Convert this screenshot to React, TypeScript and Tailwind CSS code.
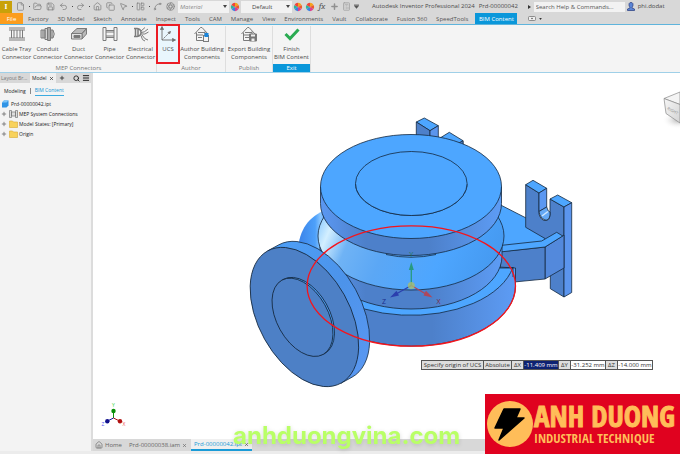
import type { ReactNode } from "react";
import {
  File,
  FolderOpen,
  Save,
  Undo2,
  Redo2,
  House,
  Copy,
  MousePointer2,
  LayoutPanelLeft,
  Spline,
  Aperture,
  Plus,
  Calculator,
  Search,
  Menu,
  X,
} from "lucide-react";

const quickTools = [
  { label: "New", icon: File, menu: true },
  { label: "Open", icon: FolderOpen },
  { label: "Save", icon: Save },
  { label: "Undo", icon: Undo2, menu: true },
  { label: "Redo", icon: Redo2, menu: true },
  { label: "Home", icon: House },
  { label: "Switch", icon: Copy },
  { label: "Select", icon: MousePointer2, menu: true },
  { label: "Team Web", icon: LayoutPanelLeft, menu: true },
  { label: "Update", icon: Spline },
  { label: "Appearance", icon: Aperture },
];

const ribbonTabs = [
  "Factory",
  "3D Model",
  "Sketch",
  "Annotate",
  "Inspect",
  "Tools",
  "CAM",
  "Manage",
  "View",
  "Environments",
  "Vault",
  "Collaborate",
  "Fusion 360",
  "SpeedTools",
];

function ColorWheel() {
  return (
    <svg viewBox="0 0 12 12" className="size-[10px]" aria-hidden="true">
      <path d="M6 6V1A5 5 0 0 1 10.3 3.5Z" fill="#f6a21d" />
      <path d="M6 6L10.3 3.5A5 5 0 0 1 10.3 8.5Z" fill="#ef5a28" />
      <path d="M6 6L10.3 8.5A5 5 0 0 1 6 11Z" fill="#d9418f" />
      <path d="M6 6V11A5 5 0 0 1 1.7 8.5Z" fill="#3f7fe0" />
      <path d="M6 6L1.7 8.5A5 5 0 0 1 1.7 3.5Z" fill="#2eb39a" />
      <path d="M6 6L1.7 3.5A5 5 0 0 1 6 1Z" fill="#f04438" />
    </svg>
  );
}

function StyleSelect({ label, value, italic }: { label: string; value: string; italic?: boolean }) {
  return (
    <label className="relative flex h-[12px] w-[51px] items-center bg-[#f2f2f2]">
      <span className="sr-only">{label}</span>
      <select
        defaultValue={value}
        className={
          italic
            ? "h-full w-full appearance-none bg-transparent pl-[2px] text-[6px] italic leading-[12px] text-[#8a8a8a]"
            : "h-full w-full appearance-none bg-transparent pl-[11px] text-[6px] leading-[12px] text-[#444]"
        }
      >
        <option>{value}</option>
      </select>
      <svg viewBox="0 0 4 3" className="pointer-events-none absolute right-[2px] h-[3px] w-[4px]" aria-hidden="true">
        <path d="M0 0H4L2 3Z" fill="#444" />
      </svg>
    </label>
  );
}

function TitleBar() {
  return (
    <header className="flex h-[13px] items-center bg-[#d8d8d8] text-[6px] text-[#4a4a4a]">
      <button
        aria-label="Inventor menu"
        className="mr-[2px] flex h-[12px] w-[12px] items-center justify-center bg-[#c9a10a] font-serif text-[8px] font-bold leading-none text-white"
      >
        I
      </button>
      {quickTools.map(({ label, icon: Icon, menu }) => (
        <div key={label} className="flex items-center">
          <button aria-label={label} className="flex w-[13px] justify-center text-[#808080]">
            <Icon size={9} strokeWidth={2} />
          </button>
          {menu && (
            <span className="flex w-[4px] justify-center">
              <span className="size-[1px] bg-[#444]" />
            </span>
          )}
        </div>
      ))}
      <div className="ml-[1px] flex items-center">
        <StyleSelect label="Material" value="Material" italic />
        <button aria-label="Appearance browser" className="flex w-[12px] justify-center">
          <ColorWheel />
        </button>
        <StyleSelect label="Appearance" value="Default" />
      </div>
      <button aria-label="Adjust" className="flex w-[12px] justify-center">
        <ColorWheel />
      </button>
      <button aria-label="Clear" className="flex w-[12px] justify-center">
        <ColorWheel />
      </button>
      <button aria-label="Parameters" className="w-[12px] text-center font-serif text-[9px] italic leading-none text-[#555]">
        fx
      </button>
      <button aria-label="Add" className="flex w-[12px] justify-center text-[#909090]">
        <Plus size={9} strokeWidth={4} />
      </button>
      <button aria-label="Measure" className="flex w-[12px] justify-center text-[#a0a0a0]">
        <Calculator size={9} />
      </button>
      <button aria-label="Customize" className="flex w-[8px] justify-center">
        <svg viewBox="0 0 5 5" className="size-[5px]" aria-hidden="true">
          <path d="M0 .5H5M0 1.5H5L2.5 4.5Z" fill="#555" stroke="#555" strokeWidth=".4" />
        </svg>
      </button>
      <h1 className="ml-[12px] whitespace-nowrap">Autodesk Inventor Professional 2024</h1>
      <span className="ml-[4px] w-[49px] whitespace-nowrap">Prd-00000042</span>
      <svg viewBox="0 0 3 4" className="mr-[3px] h-[4px] w-[3px]" aria-hidden="true">
        <path d="M0 0L3 2L0 4Z" fill="#333" />
      </svg>
      <input
        aria-label="Search Help & Commands"
        placeholder="Search Help & Commands..."
        className="h-[10px] w-[91px] bg-[#f2f2f2] px-[2px] text-[6px] placeholder:text-[#555]"
      />
      <button className="ml-[2px] flex items-center gap-[3px]">
        <svg viewBox="0 0 8 9" className="h-[9px] w-[8px]" aria-hidden="true">
          <path d="M4 .5C6 .5 6 2 6 3C6 4.5 5 5 5 6L7.5 7V8.5H.5V7L3 6C3 5 2 4.5 2 3C2 2 2 .5 4 .5Z" fill="#5b85d6" stroke="#27397c" strokeWidth=".7" />
        </svg>
        phi.dodat
      </button>
    </header>
  );
}

function RibbonTabs() {
  return (
    <nav className="flex h-[12px] items-stretch border-b border-[#5fb4dc] bg-[#d8d8d8] text-[6px] leading-[11px] text-[#555]">
      <button className="w-[23px] bg-[#fb9d1e] pt-[1px] text-white">File</button>
      {ribbonTabs.map((tab) => (
        <button key={tab} className="whitespace-nowrap pl-[5px] pr-[4px] pt-[1px]">
          {tab}
        </button>
      ))}
      <button className="ml-[3px] w-[42px] whitespace-nowrap bg-[#0a97da] pt-[1px] text-white">BIM Content</button>
      <button aria-label="Ribbon display" className="ml-[11px] flex items-center gap-[3px]">
        <svg viewBox="0 0 8 5" className="h-[5px] w-[8px]" aria-hidden="true">
          <rect x=".5" y=".5" width="7" height="4" rx="1" fill="#eee" stroke="#777" strokeWidth=".8" />
          <circle cx="4" cy="2.5" r=".8" fill="#555" />
        </svg>
        <svg viewBox="0 0 4 3" className="h-[2px] w-[3px]" aria-hidden="true">
          <path d="M0 0H4L2 3Z" fill="#333" />
        </svg>
      </button>
    </nav>
  );
}

function Glyph({ children }: { children: ReactNode }) {
  return (
    <svg viewBox="0 0 16 16" className="mb-[3px] size-[16px]" fill="none" stroke="#7b7b7b" strokeWidth="1" aria-hidden="true">
      {children}
    </svg>
  );
}

function RibbonButton({ icon, lines, width }: { icon: ReactNode; lines: string[]; width: string }) {
  return (
    <button className={`flex flex-col items-center whitespace-nowrap ${width}`}>
      <Glyph>{icon}</Glyph>
      {lines.map((line) => (
        <span key={line} className="h-[8px]">
          {line}
        </span>
      ))}
    </button>
  );
}

const house = <path d="M.5 8L6.5 1.5H8L14 8M2.5 6.5V14.5H9M2.5 9H9M4 11.5H8M11 5.5V9M4 6.5H11" />;

function RibbonGroup({ title, active, children }: { title: string; active?: boolean; children: ReactNode }) {
  return (
    <section className="flex flex-col border-r border-[#dedede]">
      <div className="flex h-[38px]">{children}</div>
      <h2
        className={
          active
            ? "h-[8px] bg-[#0a97da] text-center leading-[8px] text-white"
            : "h-[8px] text-center leading-[8px] text-[#777]"
        }
      >
        {title}
      </h2>
    </section>
  );
}

function Ribbon() {
  return (
    <div className="flex h-[48px] border-b border-[#9fd0e8] bg-[#f4f4f4] pl-[1px] pt-[1px] text-[6px] leading-[8px] text-[#4c4c4c]">
      <RibbonGroup title="MEP Connectors">
        <RibbonButton
          width="w-[31px]"
          lines={["Cable Tray", "Connector"]}
          icon={<path d="M0 2H16M0 4H16M0 12H16M0 14H16M2.5 4V12M5 4V12M8 4V12M11 4V12M13.5 4V12" />}
        />
        <RibbonButton
          width="w-[31px]"
          lines={["Conduit", "Connector"]}
          icon={
            <>
              <path d="M5 2.5H7.5V13.5H5ZM7.5 1.5H10.5V14.5H7.5ZM1 4H5V12H1ZM10.5 4H13Q15.5 8 13 12H10.5Z" fill="#d5d5d5" />
              <path d="M3 4V12M9 2V14M12 4V12" />
            </>
          }
        />
        <RibbonButton
          width="w-[31px]"
          lines={["Duct", "Connector"]}
          icon={
            <>
              <path d="M.5 7.5L6 2.5H15.5L11 7.5ZM11 7.5L15.5 2.5V8L11 13Z" fill="#bababa" />
              <path d="M.5 7.5H11V13H.5Z" fill="#e2e2e2" />
              <path d="M3 9.5H9V11.5H3Z" fill="#777" />
            </>
          }
        />
        <RibbonButton
          width="w-[31px]"
          lines={["Pipe", "Connector"]}
          icon={<path d="M1 1.5H4V14.5H1ZM12 1.5H15V14.5H12ZM4 4.5H12M4 11.5H12M4 6H12M4 10H12" />}
        />
        <RibbonButton
          width="w-[31px]"
          lines={["Electrical", "Connector"]}
          icon={
            <>
              <path d="M1 2.5H4Q8 3 8 6.5Q8 10 4 10.5H1M2.5 2.5V10.5M5 3V10" strokeWidth="1.5" />
              <path d="M8 5L12 1.5M8 6.5Q11 7 15 3M8 8Q12 9 15.5 6M9 9Q12 14 15 14M8 9.5Q9 15 12 15" />
            </>
          }
        />
      </RibbonGroup>
      <RibbonGroup title="Author">
        <div className="relative flex bg-[#e9f6fd]">
          <RibbonButton
            width="w-[22px]"
            lines={["UCS"]}
            icon={
              <>
                <path d="M2 2V14H14" />
                <path d="M2 14L10 6" strokeDasharray="2 1" />
                <path d="M.5 3.5L2 .5L3.5 3.5ZM12.5 12.5L15.5 14L12.5 15.5ZM8 6.5L10.5 5.5L9.5 8Z" fill="#666" />
              </>
            }
          />
          <span className="pointer-events-none absolute -inset-x-[1px] -top-[2px] bottom-0 border-2 border-[#ec1c24]" />
        </div>
        <RibbonButton
          width="w-[46px]"
          lines={["Author Building", "Components"]}
          icon={
            <>
              {house}
              <rect x="9.5" y="9.5" width="5" height="6" />
              <rect x="10.5" y="7" width="4" height="4" fill="#1b87dd" stroke="none" />
            </>
          }
        />
      </RibbonGroup>
      <RibbonGroup title="Publish">
        <RibbonButton
          width="w-[46px]"
          lines={["Export Building", "Components"]}
          icon={
            <>
              {house}
              <path d="M8.5 8H15.5V15H8.5Z" fill="#777" />
              <path d="M10 8.5H14V10.5H10ZM10.5 12.5H13.5V15H10.5Z" fill="#eee" stroke="none" />
            </>
          }
        />
      </RibbonGroup>
      <RibbonGroup title="Exit" active>
        <RibbonButton
          width="w-[37px]"
          lines={["Finish", "BIM Content"]}
          icon={<path d="M1.5 8L6 12.5L14.5 3.5" stroke="#2aab52" strokeWidth="3" />}
        />
      </RibbonGroup>
    </div>
  );
}

function Folder() {
  return (
    <svg viewBox="0 0 9 8" className="h-[8px] w-[9px]" aria-hidden="true">
      <path d="M.5 1H3.5L4.5 2H8.5V7.5H.5Z" fill="#f8d25c" stroke="#d9a931" strokeWidth=".6" />
    </svg>
  );
}

function TreeRow({ icon, text }: { icon: ReactNode; text: string }) {
  return (
    <li className="flex h-[10px] items-center gap-[1px]">
      <button aria-label={`Expand ${text}`} className="flex w-[8px] justify-center text-[#666]">
        <Plus size={6} strokeWidth={3} />
      </button>
      {icon}
      <span className="whitespace-nowrap">{text}</span>
    </li>
  );
}

function ModelBrowser() {
  return (
    <aside className="flex w-[93px] shrink-0 flex-col border-r-2 border-[#dcdcdc] bg-[#f3f3f3] text-[5px] leading-[10px] text-[#222]">
      <div className="flex h-[10px] items-center bg-[#d8d8d8]">
        <button className="w-[30px] whitespace-nowrap pl-[1px] text-left text-[#777]">Layout Br...</button>
        <button className="flex h-full w-[26px] items-center justify-between bg-[#f0f0f0] px-[2px]">
          Model
          <X size={5} strokeWidth={3} />
        </button>
        <button aria-label="Add panel" className="flex w-[12px] justify-center">
          <Plus size={6} strokeWidth={3} />
        </button>
        <button aria-label="Find" className="ml-auto flex w-[10px] justify-center">
          <Search size={7} strokeWidth={3} />
        </button>
        <button aria-label="Browser menu" className="flex w-[10px] justify-center">
          <Menu size={8} strokeWidth={3} />
        </button>
      </div>
      <div className="flex items-center gap-[4px] px-[4px] pt-[2px]">
        <button>Modeling</button>
        <span className="h-[6px] w-[1px] bg-[#888]" />
        <button className="border-b border-[#3cabe0] text-[#1595d3]">BIM Content</button>
      </div>
      <div className="mt-[3px] flex h-[10px] items-center gap-[2px] pl-[1px]">
        <svg viewBox="0 0 8 8" className="size-[8px]" aria-hidden="true">
          <path d="M1 2.5L3 .5H7.5V5.5L5.5 7.5H1Z" fill="#2f94e6" />
          <path d="M1 2.5L3 .5H7.5L5.5 2.5Z" fill="#7cc4f8" />
        </svg>
        Prd-00000042.ipt
      </div>
      <ul>
        <TreeRow
          text="MEP System Connections"
          icon={
            <svg viewBox="0 0 9 8" className="h-[8px] w-[9px]" fill="#ddd" stroke="#777" strokeWidth=".7" aria-hidden="true">
              <path d="M.5.5H2.5V7.5H.5ZM6.5.5H8.5V7.5H6.5ZM2.5 2H6.5V6H2.5Z" />
            </svg>
          }
        />
        <TreeRow text="Model States: [Primary]" icon={<Folder />} />
        <TreeRow text="Origin" icon={<Folder />} />
      </ul>
    </aside>
  );
}

function PartDrawing() {
  return (
    <svg
      viewBox="93 73 587 366"
      className="absolute inset-0 h-full w-full"
      role="img"
      aria-label="Valve body part"
      strokeLinejoin="round"
    >
      <defs>
        <linearGradient id="wall">
          <stop offset="0" stopColor="#5b98f2" />
          <stop offset=".25" stopColor="#4d80ca" />
          <stop offset=".6" stopColor="#4d80ca" />
          <stop offset="1" stopColor="#5d9cf5" />
        </linearGradient>
        <linearGradient id="cone" x1="0" y1=".35" x2="1" y2=".6">
          <stop offset="0" stopColor="#8ccbff" />
          <stop offset=".08" stopColor="#d3efff" />
          <stop offset=".2" stopColor="#6fb3f5" />
          <stop offset=".4" stopColor="#5ba7f5" />
          <stop offset=".7" stopColor="#4da6ff" />
          <stop offset="1" stopColor="#4599f0" />
        </linearGradient>
        <linearGradient id="rim" x1="0" y1="0" x2="1" y2="1">
          <stop offset="0" stopColor="#4da0f8" />
          <stop offset=".5" stopColor="#4c93ea" />
          <stop offset="1" stopColor="#5b98f2" />
        </linearGradient>
        <linearGradient id="bulge">
          <stop offset="0" stopColor="#3a82e8" />
          <stop offset=".45" stopColor="#4da0fa" />
          <stop offset=".6" stopColor="#8cc8ff" />
          <stop offset=".75" stopColor="#4790ee" />
          <stop offset="1" stopColor="#3f88e6" />
        </linearGradient>
        <linearGradient id="cube" x1="0" y1="0" x2="1" y2="1">
          <stop offset="0" stopColor="#f6f6f6" />
          <stop offset="1" stopColor="#d4d4d4" />
        </linearGradient>
        <radialGradient id="cubeShadow">
          <stop offset="0" stopColor="#b5b5b5" />
          <stop offset="1" stopColor="#fff" stopOpacity="0" />
        </radialGradient>
      </defs>

      <g stroke="#14283f" strokeWidth=".8">
        <g fill="#4da6ff">
          <path d="M416.3 122L424.3 118L438.3 125.7L430 130.7Z" />
          <path d="M416.3 122L430 130.7V140H416.3Z" fill="#4d80ca" />
          <path d="M430 130.7L438.3 125.7V142H430Z" fill="#5b95ee" />
          <path d="M440 138L449.3 132.3L463 140.7V150H440Z" />
          <path d="M455 145L463 140.7V150H455Z" fill="#4d80ca" />
        </g>

        <path d="M498 204L502 205.7L530 220L548 238L541 243L504 247L490 240Z" fill="#4da6ff" />
        <path d="M525.7 184.7L539 193V214Q541 221 546 220.5Q550 220 550 214V199L564 207V297L550.3 288.7V268L545 238.5L525.7 227.3Z" fill="#4d80ca" />
        <path d="M525.7 184.7L533 180.3L546.7 188.3L539 193Z" fill="#4da6ff" />
        <path d="M539 193L546.7 188.3V207L539 211.5Z" fill="#5b98f2" />
        <path d="M539 211.5L546.7 207Q548 212 550 212V215Q549 221 545 220Q540 218 539 211.5Z" fill="#65a9f5" />
        <path d="M542 216L548 211.5" stroke="#cfe8ff" strokeWidth="1.5" />
        <path d="M550 199L557.7 195L571.7 202.7L564 207Z" fill="#4da6ff" />
        <path d="M564 207L571.7 202.7V292.5L564 297Z" fill="#5b95ee" />
        <path d="M545 247L564 235V268L545 279Z" fill="#5389dc" />
        <path d="M500 251.7L545 247V279L514 282L500 278Z" fill="#4d80ca" />
        <path d="M500 245.5L541.7 241L556.7 232.3L562.7 236L545 247L500 252Z" fill="#4da6ff" />

        <path d="M307 256V286A104 60 0 0 0 515.5 286V268Z" fill="url(#wall)" />
        <path d="M307 256A104 60 0 0 0 513 267L512 268L500 268V240H322Z" fill="#4da6ff" />
        <path d="M513 267V277" fill="none" />
        <path d="M326 210C309 216 299 230 298 250L312 274H336V240Z" fill="url(#bulge)" stroke="none" />
        <path d="M320 240V256A91 53 0 0 0 502 256V240Z" fill="url(#wall)" />
        <ellipse cx="411" cy="236" rx="93" ry="54" fill="url(#cone)" />
        <path d="M386 254.500Q411 260 436 254.500" fill="none" />
        <path d="M320.5 186.5V203.5A90.5 52 0 0 0 501.5 203.5V186.5Z" fill="url(#wall)" />
        <ellipse cx="411" cy="186.5" rx="90.5" ry="52" fill="#4da6ff" />
        <path d="M355.5 184V186.5A56 32 0 0 0 467 186.5V184Z" fill="#4d8fe6" />
        <ellipse cx="411.3" cy="183.5" rx="55.8" ry="32" fill="#4da6ff" />

        <path d="M267.8 250.8L278.8 244.8A75.6 45.6 60.8 0 1 352 377.2L341 383.2Z" fill="url(#rim)" />
        <ellipse cx="304.4" cy="317" rx="75.6" ry="45.6" transform="rotate(60.8 304.4 317)" fill="#4d80c6" />
        <ellipse cx="304" cy="316.5" rx="42.5" ry="25.6" transform="rotate(60.8 304 316.5)" fill="#4da0f8" />
        <ellipse cx="302.5" cy="317.3" rx="42.5" ry="25.6" transform="rotate(60.8 302.5 317.3)" fill="#4d80c6" />
      </g>

      <ellipse cx="411.3" cy="286" rx="104.2" ry="60.2" fill="none" stroke="#f5141c" strokeWidth="1.3" />

      <g fontFamily="'Open Sans', 'Noto Sans', sans-serif" fontSize="7" textAnchor="middle">
        <g strokeWidth="1.3">
          <path d="M411.3 285V270" stroke="#279a80" />
          <path d="M408.8 270L411.3 262L413.8 270Z" fill="#279a80" />
          <path d="M411.3 285.5L425 293.5" stroke="#b0465a" />
          <path d="M426 290.8L432.5 297.5L423.5 295.5Z" fill="#b0465a" />
          <path d="M411.3 285.5L397 293.5" stroke="#2b3fae" />
          <path d="M396.5 290.8L390 297.5L399 295.5Z" fill="#2b3fae" />
          <circle cx="411.3" cy="285.5" r="3.5" fill="#a8bd6e" fillOpacity=".8" />
        </g>
        <text x="411.3" y="257" fill="#1b7658">Y</text>
        <text x="438.5" y="304" fill="#7c2345">X</text>
        <text x="384" y="304" fill="#1b2f8c">Z</text>
      </g>

      <g fontFamily="'Open Sans', 'Noto Sans', sans-serif" fontSize="5" textAnchor="middle" strokeWidth="1">
        <path d="M113.5 418V411" stroke="#0a8f0a" />
        <path d="M113.5 418L119.5 421" stroke="#b01010" />
        <path d="M113.5 418L107.5 421" stroke="#1515a0" />
        <circle cx="113.5" cy="411" r="2.2" fill="#0a8f0a" />
        <circle cx="120" cy="421.3" r="2.2" fill="#b01010" />
        <circle cx="107.3" cy="421.3" r="2.2" fill="#10108c" />
        <text x="113.5" y="407" fill="#35d435">Y</text>
        <text x="124" y="426" fill="#f05555">X</text>
        <text x="103" y="426" fill="#5555f0">Z</text>
      </g>

      <ellipse cx="678" cy="120" rx="16" ry="9" fill="url(#cubeShadow)" />
      <path d="M664 98.5L680 92V105L680 104.5Z" fill="#f4f4f4" stroke="#888" strokeWidth=".7" />
      <path d="M664 98.5L680 104.5V123L666 113.5Z" fill="url(#cube)" stroke="#888" strokeWidth=".7" />
      <text x="672" y="112" fontSize="4" fontFamily="'Open Sans', sans-serif" fill="#888" textAnchor="middle" transform="rotate(28 672 112)">
        RIGHT
      </text>
    </svg>
  );
}

function OffsetField({ axis, value, active }: { axis: string; value: string; active?: boolean }) {
  return (
    <label className="flex gap-[1px]">
      <span className="w-[11px] bg-[#dedede] text-center">{axis}</span>
      <input
        defaultValue={value}
        className={
          active
            ? "w-[34px] bg-[#0d2272] text-center text-white"
            : "w-[34px] bg-white text-center text-[#333]"
        }
      />
    </label>
  );
}

function OriginPrompt() {
  return (
    <div className="absolute left-[328px] top-[287px] flex gap-[1px] whitespace-nowrap border border-[#555] bg-[#555] text-[6px] leading-[8px] text-[#333]">
      <span className="w-[61px] bg-[#dedede] text-center">Specify origin of UCS</span>
      <span className="w-[27px] bg-[#dedede] text-center">Absolute</span>
      <OffsetField axis="ΔX" value="-11.409 mm" active />
      <OffsetField axis="ΔY" value="-31.252 mm" />
      <OffsetField axis="ΔZ" value="-14.000 mm" />
    </div>
  );
}

function DocumentTabs() {
  return (
    <nav className="flex h-[12px] items-stretch bg-[#d8d8d8] pl-[2px] text-[6px] leading-[11px] text-[#666]">
      <button className="flex w-[34px] items-center gap-[2px]">
        <House size={8} strokeWidth={2} />
        Home
      </button>
      <button className="flex w-[62px] items-center gap-[2px] whitespace-nowrap">
        Prd-00000038.iam
        <X size={5} strokeWidth={3} />
      </button>
      <button className="flex w-[61px] items-center gap-[2px] whitespace-nowrap border-b-2 border-[#1a9bd7] bg-[#f0f0f0] pl-[3px] text-[#1a9bd7]">
        Prd-00000042.ipt
        <X size={5} strokeWidth={3} className="text-[#555]" />
      </button>
    </nav>
  );
}

function BrandBadge() {
  return (
    <div className="absolute bottom-0 right-0 flex h-[60px] w-[195px] items-center whitespace-nowrap bg-[#e0021f] pl-[2px] text-[#ffbd59]">
      <svg viewBox="0 0 46 46" className="size-[46px] shrink-0" aria-hidden="true">
        <circle cx="23" cy="23" r="23" fill="#ffbd59" />
        <path d="M17 8H33L29 17H37L12 39L17 27H8Z" fill="#000" stroke="#000" strokeWidth="1.5" strokeLinejoin="round" />
      </svg>
      <div className="ml-[1px] font-['Liberation_Sans_Narrow','Open_Sans_Condensed','DejaVu_Sans_Condensed',sans-serif] font-bold">
        <p className="text-[29px] leading-[28px] [-webkit-text-stroke:1px_#ffbd59]">ANH DUONG</p>
        <p className="text-[13px] leading-[16px]">INDUSTRIAL TECHNIQUE</p>
      </div>
    </div>
  );
}

export default function App() {
  return (
    <div className="relative flex h-screen flex-col overflow-hidden bg-[#ececec] font-['Open_Sans','Noto_Sans',sans-serif]">
      <TitleBar />
      <RibbonTabs />
      <Ribbon />
      <div className="flex min-h-0 flex-1">
        <ModelBrowser />
        <div className="flex min-w-0 flex-1 flex-col">
          <main className="relative flex-1 bg-white">
            <PartDrawing />
            <OriginPrompt />
          </main>
          <DocumentTabs />
        </div>
      </div>
      <footer className="h-[3px] bg-[#ececec]" />
      <p className="absolute bottom-[4px] left-[233px] font-['Inter','Liberation_Sans',sans-serif] text-[24px] font-bold leading-[28px] text-[#b9ff66] drop-shadow-sm">
        anhduongvina.com
      </p>
      <BrandBadge />
    </div>
  );
}
